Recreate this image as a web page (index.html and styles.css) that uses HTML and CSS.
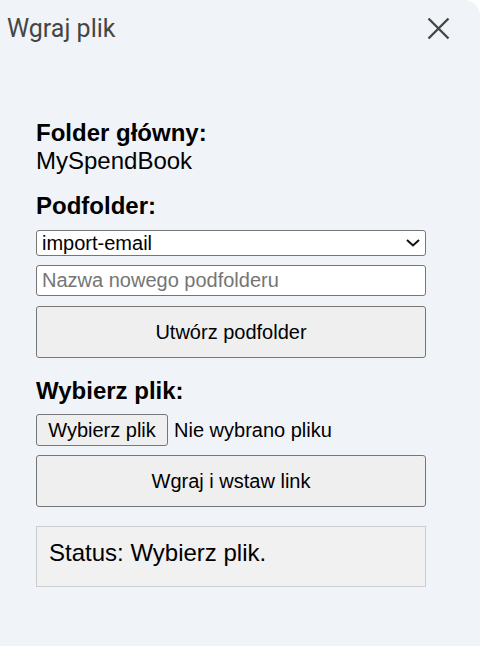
FILE: index.html
```html
<!DOCTYPE html>
<html lang="pl">
<head>
<meta charset="utf-8">
<title>Wgraj plik</title>
<link rel="stylesheet" href="styles.css">
</head>
<body>
<div class="panel">
  <header class="header">
    <h1 class="title">Wgraj plik</h1>
    <svg class="close" width="24" height="24" viewBox="0 0 24 24" aria-label="Zamknij">
      <path d="M2.5 2.5 L22.5 22.5 M22.5 2.5 L2.5 22.5" stroke="#444746" stroke-width="2.4" fill="none"/>
    </svg>
  </header>
  <main class="content">
    <div class="label">Folder główny:</div>
    <div class="value">MySpendBook</div>

    <div class="label gap-section">Podfolder:</div>
    <div class="select-wrap">
      <select class="select">
        <option>import-email</option>
      </select>
      <svg class="chevron" width="14" height="8" viewBox="0 0 14 8">
        <path d="M1 1 L7 6.5 L13 1" stroke="#111" stroke-width="2" fill="none"/>
      </svg>
    </div>
    <input class="text-input" type="text" placeholder="Nazwa nowego podfolderu">
    <button class="btn btn-create">Utwórz podfolder</button>

    <div class="label gap-section2">Wybierz plik:</div>
    <div class="file-row">
      <button class="file-btn">Wybierz plik</button>
      <span class="file-name">Nie wybrano pliku</span>
    </div>
    <button class="btn btn-upload">Wgraj i wstaw link</button>

    <div class="status">Status: Wybierz plik.</div>
  </main>
</div>
</body>
</html>
```

FILE: styles.css
```css
html, body {
  margin: 0;
  padding: 0;
  background: #ffffff;
}

.panel {
  width: 480px;
  min-height: 646px;
  background: #f0f4f9;
  border-top-right-radius: 16px;
  box-sizing: border-box;
}

.header {
  display: flex;
  justify-content: space-between;
  align-items: flex-start;
  padding: 14px 30px 0 7px;
}

.title {
  margin: 0;
  font-family: Roboto, "Open Sans", sans-serif;
  font-weight: 400;
  font-size: 25px;
  line-height: 30px;
  color: #444746;
}

.close {
  display: block;
  margin-top: 2px;
}

.content {
  display: flex;
  flex-direction: column;
  margin: 75px 0 0 36px;
  width: 390px;
  font-family: "Liberation Sans", Arial, sans-serif;
  color: #000;
}

.label {
  font-size: 24px;
  font-weight: 700;
  line-height: 28px;
}

.value {
  font-size: 24px;
  line-height: 28px;
}

.gap-section {
  margin-top: 17px;
}

.gap-section2 {
  margin-top: 19px;
}

.select-wrap {
  position: relative;
  margin-top: 10px;
  height: 26px;
}

.select {
  appearance: none;
  -webkit-appearance: none;
  width: 100%;
  height: 26px;
  box-sizing: border-box;
  margin: 0;
  padding: 0 30px 0 5px;
  border: 1px solid #767676;
  border-radius: 3px;
  background: #ffffff;
  font-family: "Liberation Sans", Arial, sans-serif;
  font-size: 20px;
  line-height: 24px;
  color: #000;
}

.chevron {
  position: absolute;
  right: 6px;
  top: 9px;
}

.text-input {
  margin-top: 9px;
  height: 31px;
  box-sizing: border-box;
  padding: 0 5px;
  border: 1px solid #767676;
  border-radius: 3px;
  background: #ffffff;
  font-family: "Liberation Sans", Arial, sans-serif;
  font-size: 20px;
  color: #000;
}

.text-input::placeholder {
  color: #757575;
}

.btn {
  height: 52px;
  box-sizing: border-box;
  border: 1px solid #767676;
  border-radius: 3px;
  background: #efefef;
  font-family: "Liberation Sans", Arial, sans-serif;
  font-size: 20px;
  color: #000;
  padding: 0;
}

.btn-create {
  margin-top: 10px;
}

.btn-upload {
  margin-top: 9px;
}

.file-row {
  display: flex;
  align-items: center;
  gap: 6px;
  margin-top: 9px;
  height: 32px;
}

.file-btn {
  height: 32px;
  width: 132px;
  box-sizing: border-box;
  border: 1px solid #767676;
  border-radius: 3px;
  background: #efefef;
  font-family: "Liberation Sans", Arial, sans-serif;
  font-size: 20px;
  color: #000;
  padding: 0;
}

.file-name {
  font-size: 20px;
}

.status {
  margin-top: 19px;
  height: 61px;
  box-sizing: border-box;
  padding: 12px 12px 0 12px;
  border: 1px solid #cccccc;
  background: #f1f1f1;
  font-size: 24px;
  line-height: 28px;
}
```
